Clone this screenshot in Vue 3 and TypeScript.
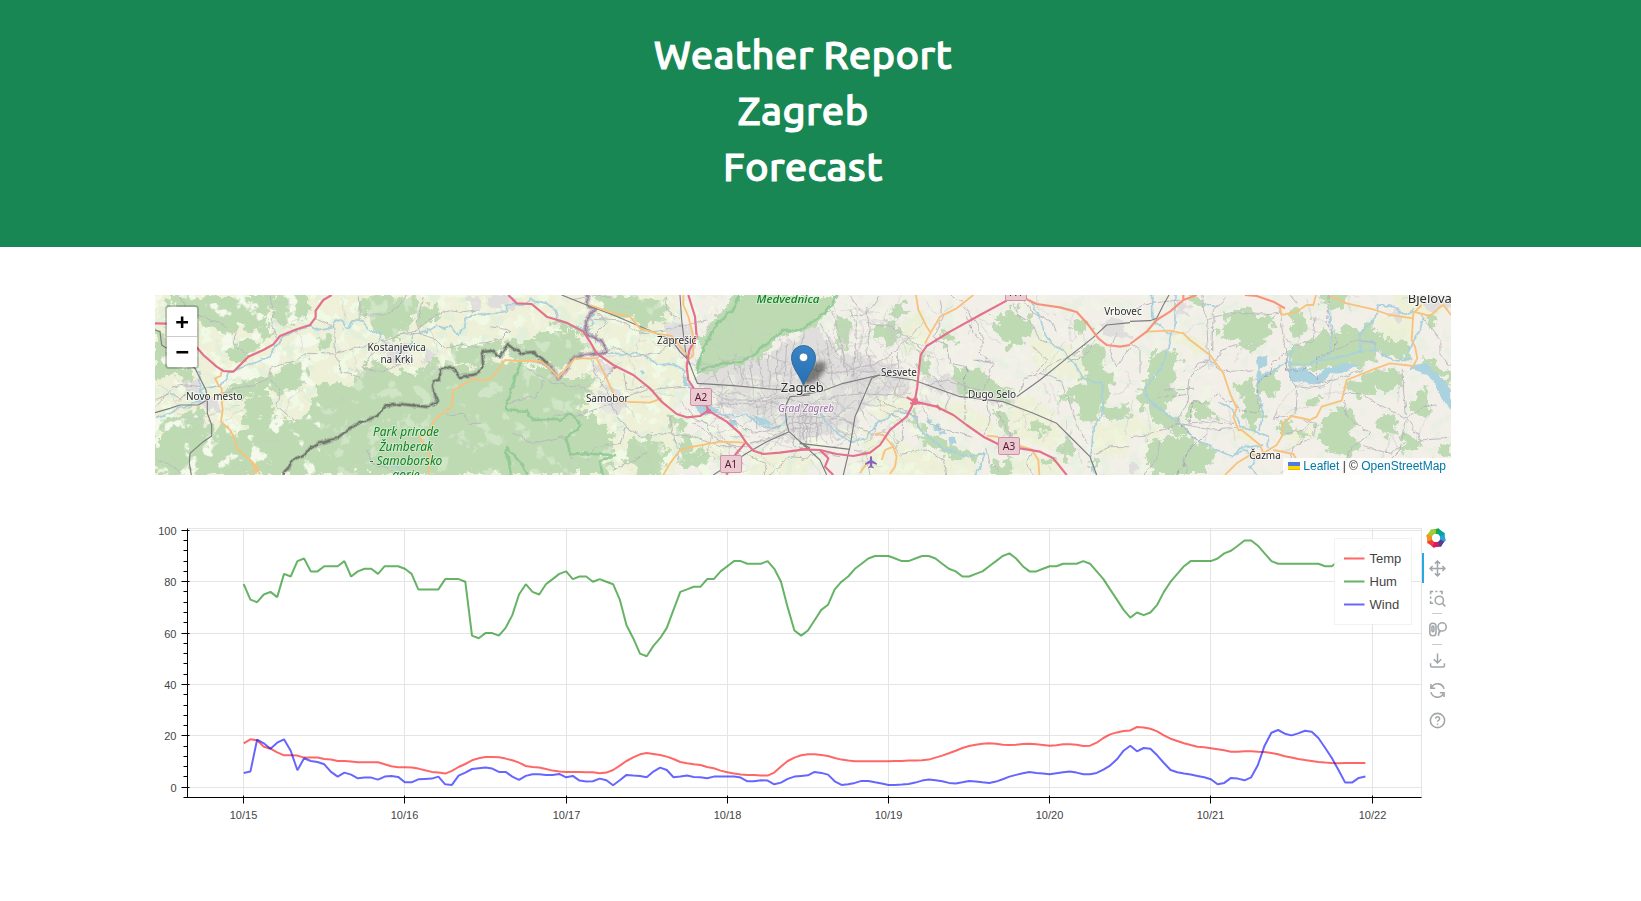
<script setup lang="ts">
interface Section {
  x: number
  forest: string[]
  farm: string[]
  town: string[]
  lake: string[]
  minor: string[]
  river: string[]
  rail: string[]
  primary: string[]
  trunk: string[]
  motorway: string[]
  admin: string[]
}

interface Label {
  text: string
  x: number
  y: number
  kind: string
}

// Map geometry, split into vertical sections; units are a third of a pixel.
const sections: Section[] = [
  {
    x: 150,
    forest: [
      '55,15 130,15 150,30 190,15 372,15 362,60 340,105 372,130 340,150 300,108 260,118 230,135 180,118 150,95 100,70 60,50',
      '15,110 45,125 50,170 90,235 130,240 130,280 90,270 50,250 15,280',
      '380,15 470,15 490,60 440,95 400,105 372,90 365,50',
      '630,20 800,15 800,60 780,110 720,150 690,130 650,95 632,60',
      '800,60 850,40 880,70 840,100 805,110',
      '990,238 990,555 400,555 150,555 120,540 80,500 40,460 15,400 60,385 110,360 150,350 165,390 200,420 240,400 260,440 300,420 280,380 290,330 340,300 370,340 380,380 440,400 480,370 500,300 540,270 600,290 620,260 650,220 690,215 720,250 790,250 850,210 900,222',
      '220,290 270,270 350,262 390,240 420,215 460,210 490,240 470,290 400,310 350,300 290,320 240,330',
      '890,170 990,160 990,230 940,220 900,200',
      '15,440 70,470 120,520 110,555 15,555',
      '230,180 280,150 330,150 310,190 270,215 240,220',
      '500,150 540,130 550,170 520,180',
    ],
    farm: [
      '370,110 560,60 650,100 700,150 660,180 620,250 560,260 490,200 420,210 360,240',
      '780,110 860,60 990,60 990,170 880,170 820,160 760,160',
      '180,350 215,380 200,440 250,500 200,555 130,540 120,470 150,390',
    ],
    town: [
      '150,320 215,330 220,370 180,370 150,340',
      '940,20 990,20 990,60 960,60',
      '700,160 780,160 780,215 720,215',
      '100,265 150,265 160,310 110,300',
      '820,180 860,190 850,225 825,215',
    ],
    lake: [],
    minor: [
      '360,15 370,60 365,110 385,145',
      '495,85 555,115 556,200 567,215 570,245 600,250 630,265',
      '555,190 600,180 700,150 750,135 800,120 860,75 900,62 940,68 990,62',
      '555,192 470,190 440,210 390,225 360,235 362,260 300,290 240,300 200,320',
      '360,265 390,300 380,350 410,375 445,398',
      '625,20 628,75 700,75 745,50 770,15',
      '740,135 800,130 850,145 880,175 950,165 990,175',
      '700,160 660,200 640,235 700,245 740,225 790,220',
      '15,350 70,290 110,285 150,290',
      '20,510 60,520 95,555',
      '15,330 60,310 90,330 120,300',
      '650,480 665,520 700,530 730,540',
      '890,375 940,370 960,400 990,400',
      '820,20 800,100 810,130',
      '260,120 250,160 300,200',
      '90,20 110,60 180,90 230,110',
    ],
    river: [
      '15,382 60,370 110,345 150,335 150,300 170,295 215,285 235,250 270,235 320,215 360,200 370,175 400,140 440,120 480,110 510,122 550,112 553,92 566,84 580,95 590,115 605,100 620,92 640,97 660,125 690,128 692,150 710,158',
      '740,190 780,165 790,135 830,125 860,105 885,118 905,105 925,135 945,115 945,85 965,75 990,75',
      '135,235 150,250 150,300 170,320',
      '690,518 740,530 765,552',
    ],
    rail: [
      '15,368 60,355 90,345 145,345 172,330 168,300 150,265 135,235 100,210',
      '172,330 172,370 185,405 185,438 160,455 120,490 118,520 124,555',
      '15,120 30,125 35,165 50,175',
    ],
    primary: [
      '215,245 212,258 195,265 205,285 215,295 215,330 218,360 213,395 240,420 255,450 260,475 300,510 310,525 330,552',
      '300,550 325,535 300,510',
      '990,270 970,265 950,278 910,300 905,350 870,375 850,395 840,430 808,438 825,470 840,500 835,552',
    ],
    trunk: [],
    motorway: [
      '15,100 50,101',
      '140,172 160,195 200,230 220,243 250,245 265,230 295,200 340,180 370,163 390,138 440,118 480,105 497,82 497,62 520,30 545,15',
    ],
    admin: [],
  },
  {
    x: 480,
    forest: [
      '0,170 30,155 85,152 130,160 180,130 230,120 300,135 320,150 340,180 290,200 240,240 225,245 200,225 120,210 85,190 70,170 40,190 0,240',
      '0,215 110,215 200,235 240,265 290,270 340,255 350,290 310,320 300,360 360,400 400,430 400,490 350,500 400,520 380,555 0,555',
      '650,240 640,220 665,190 655,150 680,105 730,60 760,15 990,15 990,90 960,120 900,140 860,180 810,215 760,225 700,245 665,255',
      '350,15 420,15 560,30 555,80 500,120 450,85 400,80 350,45',
      '460,450 510,440 560,470 540,555 480,555 430,510',
      '600,440 640,430 640,470 620,500 595,480',
      '205,90 250,100 330,120 300,130 230,115',
      '560,370 600,380 620,420 590,430',
      '610,490 680,480 700,510 660,530 600,530',
    ],
    farm: [
      '0,80 100,50 250,110 230,125 100,150 0,160',
      '210,15 320,15 330,120 240,90',
      '360,70 480,120 580,180 620,240 620,290 540,310 420,230 370,190',
      '400,230 460,260 540,330 460,370 420,300',
      '330,45 600,110 590,150 520,140 420,100',
      '640,440 780,460 720,500 640,530',
      '810,490 990,490 990,555 800,555',
    ],
    town: [
      '15,25 80,15 120,40 80,60 30,50',
      '640,290 660,255 760,225 860,190 920,160 990,120 990,470 900,440 800,380 720,340 700,310',
      '350,300 430,300 440,350 400,380 350,350',
      '550,80 640,110 640,200 590,190 560,140',
      '740,40 780,15 790,40',
      '330,200 400,240 370,270',
    ],
    lake: [
      '640,345 680,340 715,360 705,375 660,375',
      '815,375 850,385 880,405 840,402',
      '745,390 765,390 770,410 755,408',
      '608,262 622,264 625,285 612,285',
      '485,240 495,245 490,255 480,248',
    ],
    minor: [
      '335,205 345,250 380,300 400,360 440,410 480,440 560,430 640,440 720,470 800,470',
      '350,205 400,170 460,200 540,190 570,160',
      '420,330 500,300 600,290 640,290',
      '400,340 340,360 300,380 240,370 200,400',
      '440,410 420,460 350,470 320,510',
      '190,270 170,320 110,330 80,345',
      '100,430 160,460 250,440 280,510',
      '340,85 420,90 480,130 560,120 640,100 680,90',
      '350,65 380,100 350,130 350,160',
      '570,380 580,440 600,480 590,520',
      '640,400 700,440 760,470 790,520',
      '700,450 680,400 640,380 600,330',
      '680,300 680,350 640,340',
      '690,300 740,330 800,330 900,340',
      '700,250 720,290',
      '740,240 760,290',
      '780,230 790,292',
      '810,225 820,295',
      '835,205 850,296',
      '865,190 870,297',
      '890,180 890,310 830,330 830,420',
      '920,165 910,298',
      '945,150 930,300',
      '970,130 950,240',
      '720,340 820,340 910,320 990,350',
      '730,375 820,430 900,410',
      '810,460 860,450 920,420 990,410',
      '940,360 940,470 990,470',
      '960,360 960,465',
      '980,360 980,465',
      '920,380 990,380',
      '920,400 990,400',
      '870,555 930,500 990,505',
      '500,490 440,520 400,540',
      '140,235 220,280 300,290 350,320',
      '270,30 350,15 400,25',
      '600,90 560,60 560,20',
      '0,160 60,150 90,120 30,110',
      '720,480 740,555',
      '770,480 860,520 850,555',
      '400,230 360,290',
      '430,240 440,300 500,290',
    ],
    river: [
      '0,75 40,70 80,60 80,45 130,42 150,28 200,40 225,60 235,90 310,120 340,105 330,80 345,70',
      '385,190 430,195 460,185 500,200 530,220 580,225 615,240 610,265 640,300 635,340 690,365 740,378 800,375 840,405 890,415 930,380',
      '335,130 350,145 370,165',
    ],
    rail: [
      '245,15 320,45 400,75 470,105 540,135 575,150 600,185 625,210 640,250 652,280 760,287 870,297 990,305',
      '600,15 605,90 618,195 630,225',
      '990,315 930,320 915,350 920,400 927,425 960,455 990,475',
      '927,425 860,455 800,490 700,555',
    ],
    primary: [
      '0,272 30,268 50,245 75,210 110,213 180,213 205,230 235,262 285,205 350,205 375,255 400,310 420,335 510,338 545,325',
      '330,45 400,70 450,80 480,115 530,130 575,138 600,170 620,195',
      '610,15 610,45 625,80 638,130 640,195 625,210',
      '550,555 570,520 600,480 640,470 720,455 800,458',
    ],
    trunk: [],
    motorway: [
      '85,15 110,40 155,42 200,80 260,98 310,125 330,155 350,190 400,225 460,255 510,295 545,335 590,372 620,382 660,378 685,362 740,395 780,430 800,460 820,482 850,492 900,488 990,476',
      '625,15 645,80 650,140 628,180 620,230 625,270 645,300 675,335 685,362',
      '795,460 765,495 740,555',
      '400,235 412,230',
    ],
    admin: [
      '320,15 325,50 345,55 318,90 320,130 360,150 380,185 350,190 285,200 260,240 235,265 210,230 170,210',
    ],
  },
  {
    x: 800,
    forest: [
      '0,15 110,15 85,60 40,115 0,130',
      '110,80 150,90 155,130 120,180 110,130',
      '240,100 290,90 300,150 260,180 240,150 220,130',
      '270,60 310,40 325,60 290,80',
      '580,80 650,50 700,110 680,150 630,175 600,140',
      '820,90 870,110 850,135 820,115',
      '850,170 905,165 905,230 935,260 930,310 900,345 890,400 830,390 840,340 780,330 800,290 850,290',
      '900,350 985,345 990,385 920,400',
      '450,230 540,240 600,280 640,300 620,340 560,310 500,320 470,290',
      '330,360 380,410 420,450 500,490 550,480 540,520 470,500 400,480 350,440',
      '590,360 615,360 640,440 600,430',
      '580,500 600,530 630,490 640,555 570,555',
      '800,430 830,480 800,520 780,480',
      '360,170 380,200 390,260 360,250',
      '680,390 740,400 750,430 700,430',
      '720,500 760,510 740,540',
      '410,130 450,120 470,160 430,170',
      '880,500 900,530 870,550',
    ],
    farm: [
      '300,100 350,60 380,110 370,170 320,210',
      '220,320 300,300 340,340 270,400 230,400',
      '190,410 260,470 270,555 190,555',
      '390,330 470,340 590,390 580,450 520,420 430,370',
      '620,310 720,330 790,420 770,480 640,440',
      '280,450 400,490 520,520 520,555 270,555',
      '700,130 850,180 850,280 760,240 700,240',
      '640,500 780,500 780,555 640,555',
      '880,400 990,400 990,490 880,500',
    ],
    town: [
      '0,130 60,110 120,190 240,210 340,260 340,300 240,320 170,370 180,430 0,440',
      '370,260 440,260 500,290 490,320 390,300',
      '560,320 640,310 650,345 560,340',
      '900,100 960,90 990,140 930,150',
      '340,320 390,320 390,350',
    ],
    lake: [
      '395,410 420,403 425,420 405,424',
      '415,425 435,418 440,432 420,436',
      '445,445 465,440 470,460 450,465',
      '380,390 395,388 400,395 382,398',
    ],
    minor: [
      '60,100 110,190 160,240 230,250',
      '100,70 130,190 140,260',
      '150,60 170,100 160,260',
      '200,50 210,140 200,180 220,250',
      '240,20 200,70 150,80',
      '30,180 50,230 60,290',
      '80,150 100,290',
      '0,230 100,250 230,220 290,180 370,100',
      '0,350 60,330 160,310 240,310 320,320',
      '0,380 80,380 160,400',
      '0,400 70,400',
      '10,360 10,450',
      '30,350 30,455',
      '50,350 50,455',
      '70,350 150,400 230,440',
      '200,100 280,110 340,160 370,180',
      '290,190 300,260 280,320',
      '230,330 310,360 350,380 360,420',
      '365,345 390,400 440,420 520,440',
      '420,30 430,80 400,140 440,170 450,220 500,230',
      '640,40 650,75 690,95 720,150 750,160',
      '500,60 530,100 550,150',
      '550,300 580,220 520,210',
      '660,310 670,270 720,250 780,270 810,340 830,400 860,460',
      '720,250 740,230 830,190 860,160',
      '660,20 690,60 760,100 770,130',
      '560,320 570,390 550,440',
      '590,325 600,390 630,430 620,455',
      '400,260 450,320 430,370',
      '380,285 440,270 540,300',
      '240,360 310,390 310,440 280,480',
      '300,490 380,480 430,510 440,555',
      '560,470 570,520 600,545',
      '880,495 930,470 990,470',
      '950,130 930,180 950,230 990,170',
      '700,170 740,210 700,260',
      '700,480 680,520 700,555',
      '160,480 200,490 210,555',
      '0,510 50,490 120,500',
      '150,15 180,60',
      '890,150 850,200 800,220',
    ],
    river: [
      '60,370 100,420 150,455 200,445 230,400 290,365 340,375 370,430 420,470 460,485 510,500 555,490 540,530 525,555',
      '690,35 715,70 735,130 760,165 790,185 830,230 850,265 908,280 908,330 905,380 880,410 875,480 870,510 885,555',
    ],
    rail: [
      '0,315 60,305 130,280 238,255 340,270 480,320 610,335 700,370 770,400 820,450 870,500 890,555',
      '238,255 215,265 165,380 150,470 130,555',
      '650,320 720,270 800,205 880,142 920,105 990,98',
      '0,460 150,478',
      '0,455 60,510 80,555',
    ],
    primary: [
      '348,15 355,60 380,110 392,128 375,160',
      '392,128 420,80 470,55 520,15',
      '225,432 250,435 280,470 290,500 285,530 270,552',
      '280,470 255,480 245,510',
      '560,437 590,440 650,465 695,478 715,510 718,555',
      '180,550 200,520',
    ],
    trunk: ['680,28 710,42 780,52 830,66 860,98 895,145 920,165 960,170 990,165'],
    motorway: [
      '620,32 540,75 450,125 380,168 362,195 357,235 352,290 345,330 320,380 270,420 240,465 210,488 160,498 110,492 60,480 0,478',
      '320,322 345,335 410,350 460,375 500,405 550,440 600,465 660,475 720,485 760,505 800,555',
      '60,480 85,505 75,530 100,555',
      '345,322 345,345',
      '330,340 365,340',
      '410,345 422,360',
    ],
    admin: [
      '450,15 490,40 500,80 520,130 550,155 540,190 570,215 530,210',
      '500,230 495,280 495,400',
    ],
  },
  {
    x: 1130,
    forest: [
      '170,20 200,15 220,35 190,50',
      '290,80 340,50 380,75 430,80 430,110 380,180 340,170 300,150 260,130 280,110',
      '480,60 520,60 535,100 520,140 480,130',
      '475,200 480,170 540,160 580,120 620,130 640,100 690,130 720,105 760,140 830,160 850,200 820,210 760,190 720,220 640,230 580,240 520,230 480,250',
      '15,290 60,260 60,190 110,180 150,200 140,250 130,330 90,340 150,400 180,450 120,420 60,380 30,330',
      '310,290 350,270 380,290 400,380 370,430 340,400 350,340',
      '385,260 440,230 450,280 420,330 395,310',
      '180,350 220,330 250,370 210,400 180,390',
      '570,390 630,350 670,370 680,400 660,430 700,470 650,500 590,480 560,430',
      '60,450 150,440 250,470 230,555 70,555 50,500',
      '640,290 700,260 740,240 800,240 830,260 810,300 740,300 680,320',
      '860,310 890,290 900,340 880,380 840,370',
      '740,380 790,370 800,430 750,430',
      '800,440 840,430 880,470 820,480',
      '870,210 920,220 963,250 963,290 920,260',
      '240,370 280,390 260,405',
      '500,420 540,430 520,460',
      '540,320 570,310 560,350 530,340',
      '560,15 650,15 640,60 590,50',
      '890,80 930,80 920,110 890,100',
      '920,470 963,460 963,510 930,500',
      '450,400 480,390 490,420 450,460',
    ],
    farm: [
      '90,120 200,140 240,190 190,190 140,160',
      '720,90 840,60 850,130 830,180 760,140',
      '780,15 963,15 963,60 880,80 800,50',
      '0,360 60,400 100,420 80,450 0,430',
      '480,420 560,400 550,440 480,470',
      '300,430 350,390 380,430 360,460',
    ],
    town: [
      '780,70 810,55 820,80 800,100',
      '150,40 190,60 170,80 140,60',
      '225,210 250,210 245,235',
      '860,20 963,15 963,50 890,60',
      '0,515 30,525 20,545 0,540',
      '740,230 780,225 760,245',
    ],
    lake: [
      '380,200 410,195 412,225 390,240 400,265 375,270 385,240',
      '470,240 520,230 560,260 590,235 660,215 690,225 650,245 600,250 570,285 520,278 480,270',
      '850,225 890,220 930,260 963,300 963,360 930,320 910,270 870,245 840,238',
    ],
    minor: [
      '215,15 230,90 235,190 240,210',
      '0,60 60,40 150,30',
      '235,85 320,65 400,75 450,70',
      '450,50 455,100 460,150 470,180 470,240 500,290 495,375',
      '240,210 180,260 175,330 140,400',
      '255,212 290,170 320,160',
      '240,215 280,245 370,240',
      '85,320 140,315 170,310',
      '100,300 190,298',
      '490,375 430,385 440,370',
      '520,390 560,400 550,440 490,470 480,520 450,550',
      '540,290 600,270 640,260 700,240',
      '500,290 540,295 580,290 600,270',
      '640,310 690,310 740,340 830,385 880,350 920,345',
      '640,330 650,380 720,430 660,480 640,555',
      '830,385 860,430 870,450 960,445',
      '830,385 810,480 780,510',
      '820,235 820,300 830,380',
      '870,70 900,110 930,150 930,190 963,230',
      '700,470 780,490 830,460',
      '150,400 240,420 320,415',
      '150,405 250,395 310,400',
      '0,440 50,435 90,420 150,400',
      '170,550 160,500 230,430',
      '40,555 80,510 90,450',
      '555,80 550,150 500,170 465,145',
      '290,20 250,60 245,180',
      '620,180 680,150 740,160',
      '480,15 500,40',
      '470,430 520,420 540,400',
      '0,160 30,180 30,250',
      '240,210 200,220 190,240',
    ],
    river: [
      '65,15 65,80 90,110 125,140 110,190 90,240 50,290 45,320 80,350 150,405 200,450 260,480 310,500 330,475 400,465',
      '135,15 135,110 120,140',
      '390,420 400,360 385,310 385,270 430,240 470,215 520,225 610,205 690,185 740,180 790,210 850,205',
      '595,60 605,120 600,190 540,220',
      '690,190 690,130 735,85 745,45 790,50 820,75 850,60',
      '690,155 735,155 735,185',
      '265,335 310,360 330,410 390,430 415,440 415,475',
      '880,85 870,120 850,150 830,200',
      '310,500 340,480 375,500 360,530 380,555',
      '215,40 255,50',
      '480,240 480,190 495,170',
    ],
    rail: ['0,94 60,92 80,85 100,45 117,15'],
    primary: [
      '50,125 120,122 160,130 180,150 240,195 280,250 300,310 320,355 310,380 325,420 335,420 390,465 400,490 360,495 320,520 285,555',
      '400,490 440,465 455,440 460,400 485,378 540,390 560,380 575,350 635,332 650,270 730,238 780,220 850,228 862,205 855,170 845,150 850,70 875,45',
      '600,18 650,40 730,58 780,75 850,85',
      '850,65 900,78 925,55 940,45 963,75',
      '455,75 500,65 530,45 550,45 558,15',
      '450,50 455,75',
      '430,480 490,492 500,510',
    ],
    trunk: [
      '0,162 50,125 80,90 120,65 160,30 200,15',
      '345,15 380,18 430,35 465,55',
      '160,30 160,15',
    ],
    motorway: [],
    admin: [
      '595,15 590,90 600,120 620,150 610,185 560,200 560,270 530,235 470,245 465,190 430,215 420,250 385,270 380,340 395,350 380,370 330,360 310,330 290,335 260,310 240,340 185,335 180,400',
      '150,405 200,450 170,490 160,530 140,555',
    ],
  },
]

// Local lanes: short meandering lines from a seeded generator, denser in the city.
let seed = 77
const rand = (): number => {
  seed = (seed * 1103515245 + 12345) % 2147483648
  return seed / 2147483648
}
const lane = (x: number, y: number, steps: number, len: number): string => {
  let angle = rand() * Math.PI * 2
  const out = [`${x.toFixed(1)},${y.toFixed(1)}`]
  for (let i = 0; i < steps; i++) {
    angle += (rand() - 0.5) * 1.3
    x += Math.cos(angle) * len
    y += Math.sin(angle) * len
    out.push(`${x.toFixed(1)},${y.toFixed(1)}`)
  }
  return out.join(' ')
}
const countryLanes = Array.from({ length: 130 }, () => lane(155 + rand() * 1296, 295 + rand() * 180, 6, 6))
const cityLanes = Array.from({ length: 150 }, () => lane(705 + rand() * 195, 350 + rand() * 95, 3, 7))
const foothillLanes = Array.from({ length: 50 }, () => lane(820 + rand() * 90, 310 + rand() * 80, 4, 8))

// Protected-area outlines: the nature park and the mountain.
const parkEdges = [
  'M521 361 L505 409 L527 411 L533 420 L560 420 L570 413 L581 425 L566 438 L570 453 L615 455 L600 462 L603 475',
  'M528 475 L522 465 L506 446 L511 475',
  'M740 295 L733 310 L716 325 L701 353 L697 373 L711 366 L742 362 L760 349 L782 331 L800 330 L825 313 L838 295',
]
const stateBorder =
  'M283 475 L293 461 L305 453 L317 444 L337 438 L355 425 L375 417 L386 406 L400 404 L410 405 L428 407 L437 401 L433 388 L434 380 L440 379 L440 370 L450 367 L460 377 L477 374 L483 366 L482 351 L490 350 L500 357 L508 344 L520 353 L535 352 L548 364'

const labels: Label[] = [
  { text: 'Kostanjevica', x: 396.7, y: 351, kind: 'town' },
  { text: 'na Krki', x: 396.7, y: 363.3, kind: 'town' },
  { text: 'Novo mesto', x: 214.3, y: 399.5, kind: 'town' },
  { text: 'Zaprešić', x: 676.7, y: 344, kind: 'town' },
  { text: 'Samobor', x: 607.3, y: 402, kind: 'town' },
  { text: 'Sesvete', x: 899, y: 375.5, kind: 'town' },
  { text: 'Dugo Selo', x: 992, y: 397.7, kind: 'town' },
  { text: 'Vrbovec', x: 1123, y: 314.5, kind: 'town' },
  { text: 'Čazma', x: 1265, y: 458.7, kind: 'town' },
  { text: 'Bjelova', x: 1429.8, y: 303.3, kind: 'city' },
  { text: 'Zagreb', x: 802.3, y: 391.7, kind: 'city' },
  { text: 'Grad Zagreb', x: 806, y: 412.3, kind: 'district' },
  { text: 'Park prirode', x: 406, y: 436.3, kind: 'park' },
  { text: 'Žumberak', x: 406, y: 450.7, kind: 'park' },
  { text: '- Samoborsko', x: 406, y: 465, kind: 'park' },
  { text: 'gorje', x: 406, y: 479.3, kind: 'park' },
  { text: 'Medvednica', x: 788, y: 303.3, kind: 'park strong' },
]

const shields = [
  { text: 'A2', x: 690.5, y: 388.5 },
  { text: 'A1', x: 720.5, y: 455.5 },
  { text: 'A3', x: 998.5, y: 437.5 },
  { text: 'A4', x: 1005.5, y: 283.5 },
]

const hum: number[] = [
  79, 73, 72, 75, 76, 74, 83, 82, 88, 89, 84, 84, 86, 86, 86, 88, 82, 84, 85, 85, 83, 86, 86, 86,
  85, 83, 77, 77, 77, 77, 81, 81, 81, 80, 59, 58, 60, 60, 59, 62, 67, 75, 79, 76, 75, 79, 81, 83,
  84, 81, 82, 82, 80, 81, 80, 79, 73, 63, 58, 52, 51, 55, 58, 62, 69, 76, 77, 78, 78, 81, 81, 84,
  86, 88, 88, 87, 87, 87, 88, 85, 80, 70, 61, 59, 61, 65, 69, 71, 77, 80, 82, 85, 87, 89, 90, 90,
  90, 89, 88, 88, 89, 90, 90, 89, 87, 85, 84, 82, 82, 83, 84, 86, 88, 90, 91, 89, 86, 84, 84, 85,
  86, 86, 87, 87, 87, 88, 87, 84, 81, 77, 73, 69, 66, 68, 67, 68, 71, 76, 80, 83, 86, 88, 88, 88,
  88, 89, 91, 92, 94, 96, 96, 94, 91, 88, 87, 87, 87, 87, 87, 87, 87, 86, 86, 88, 89, 90, 92, 94,
]

const tempRaw: number[] = [
  160, 148, 151, 170, 176, 187, 196, 196, 197, 203, 203, 203, 207, 209, 213, 213, 215, 217, 217, 217, 217, 223, 229, 232,
  232, 233, 236, 241, 246, 248, 251, 243, 231, 222, 211, 205, 201, 201, 202, 206, 211, 218, 228, 231, 233, 237, 242, 245,
  246, 246, 246, 247, 247, 250, 248, 240, 227, 213, 202, 193, 189, 192, 195, 200, 207, 216, 220, 223, 225, 231, 235, 242,
  247, 251, 254, 255, 255, 257, 257, 248, 230, 213, 203, 196, 193, 193, 195, 198, 204, 209, 212, 214, 214, 214, 214, 214,
  214, 213, 213, 212, 212, 211, 209, 203, 197, 190, 182, 174, 168, 164, 161, 160, 161, 164, 165, 164, 162, 161, 163, 165,
  167, 166, 163, 163, 164, 168, 167, 158, 144, 133, 127, 123, 121, 111, 112, 116, 124, 136, 146, 153, 160, 165, 170, 172,
  175, 178, 181, 185, 185, 184, 184, 185, 186, 189, 193, 199, 203, 207, 210, 213, 216, 218, 219, 220, 219, 219, 219, 219,
]
const windRaw: number[] = [
  249, 245, 149, 160, 176, 158, 148, 182, 241, 205, 213, 216, 223, 246, 260, 248, 254, 265, 263, 263, 269, 260, 258, 261,
  277, 277, 268, 267, 266, 260, 283, 285, 257, 248, 237, 235, 233, 236, 246, 246, 260, 270, 258, 253, 253, 255, 255, 252,
  262, 258, 272, 275, 274, 266, 271, 286, 271, 255, 257, 258, 262, 245, 233, 240, 262, 260, 257, 261, 262, 265, 260, 260,
  260, 260, 263, 274, 274, 271, 272, 283, 278, 267, 260, 258, 256, 246, 249, 254, 274, 285, 283, 279, 273, 273, 277, 281,
  285, 285, 284, 282, 278, 272, 269, 271, 274, 279, 281, 277, 273, 275, 277, 279, 275, 268, 260, 255, 250, 246, 249, 251,
  253, 250, 247, 245, 248, 253, 253, 249, 239, 227, 208, 182, 167, 184, 174, 176, 196, 219, 240, 247, 251, 254, 258, 262,
  268, 283, 279, 264, 266, 271, 262, 225, 167, 128, 120, 131, 136, 130, 122, 125, 144, 173, 204, 240, 278, 278, 264, 260,
]
const toValue = (r: number): number => (292 - r) / 7.725

const sx = (hour: number): number => 88.65 + hour * 6.717
const sy = (v: number): number => 269.25 - v * 2.57
const points = (values: number[]): string =>
  values.map((v, i) => `${sx(i).toFixed(1)},${sy(v).toFixed(1)}`).join(' ')

const series = [
  { name: 'Temp', color: 'red', pts: points(tempRaw.map(toValue)) },
  { name: 'Hum', color: 'green', pts: points(hum) },
  { name: 'Wind', color: 'blue', pts: points(windRaw.map(toValue)) },
]

const crisp = (n: number): number => Math.floor(n) + 0.5
const yTicks = [0, 20, 40, 60, 80, 100].map((v) => ({ v, y: crisp(sy(v)) }))
const minorTicks = Array.from({ length: 27 }, (_, i) => -4 + i * 4)
  .filter((v) => v % 20 !== 0)
  .map((v) => crisp(sy(v)))
const xTicks = Array.from({ length: 8 }, (_, i) => ({ label: `10/${15 + i}`, x: crisp(sx(i * 24)) }))

const petals = ['#1fa44a', '#00a79d', '#2d9fdb', '#5a3a95', '#d91c5c', '#ef4136', '#f7941e', '#9fcc3b']
</script>

<template>
  <div class="page">
    <header class="hero">
      <h1>Weather Report</h1>
      <h1>Zagreb</h1>
      <h1>Forecast</h1>
    </header>

    <main class="content">
      <section class="map">
        <svg class="tiles" viewBox="155 295 1296 180" width="1296" height="180">
          <defs>
            <filter id="rough" x="-2%" y="-5%" width="104%" height="110%">
              <feTurbulence type="fractalNoise" baseFrequency="0.11" numOctaves="4" seed="4" />
              <feDisplacementMap in="SourceGraphic" scale="20" xChannelSelector="R" yChannelSelector="G" />
            </filter>
            <filter id="wobble" x="-2%" y="-5%" width="104%" height="110%">
              <feTurbulence type="fractalNoise" baseFrequency="0.12" numOctaves="3" seed="9" />
              <feDisplacementMap in="SourceGraphic" scale="5" xChannelSelector="R" yChannelSelector="G" />
            </filter>
            <filter id="woods" x="0" y="0" width="100%" height="100%">
              <feTurbulence type="fractalNoise" baseFrequency="0.07" numOctaves="5" seed="12" />
              <feColorMatrix values="0 0 0 0 0.74  0 0 0 0 0.86  0 0 0 0 0.7  14 0 0 0 -8.2" />
            </filter>
            <filter id="meadow" x="0" y="0" width="100%" height="100%">
              <feTurbulence type="fractalNoise" baseFrequency="0.08" numOctaves="5" seed="31" />
              <feColorMatrix values="0 0 0 0 0.86  0 0 0 0 0.95  0 0 0 0 0.77  0 14 0 0 -7.9" />
            </filter>
            <filter id="clearing" x="0" y="0" width="100%" height="100%">
              <feTurbulence type="fractalNoise" baseFrequency="0.06" numOctaves="5" seed="55" />
              <feColorMatrix values="0 0 0 0 0.91  0 0 0 0 0.95  0 0 0 0 0.83  0 0 12 0 -7.3" />
            </filter>
            <linearGradient id="pin" x1="0" y1="0" x2="0" y2="1">
              <stop offset="0" stop-color="#3a85c6" />
              <stop offset="1" stop-color="#2570b5" />
            </linearGradient>
            <filter id="soft" x="-50%" y="-50%" width="200%" height="200%"><feGaussianBlur stdDeviation="2" /></filter>
          </defs>

          <rect class="land" x="155" y="295" width="1296" height="180" />
          <rect class="farm" x="155" y="295" width="520" height="180" />
          <g filter="url(#rough)">
            <g v-for="s in sections" :key="s.x" :transform="`translate(${s.x} 290) scale(.33333)`">
              <polygon v-for="(p, i) in s.farm" :key="i" class="farm" :points="p" />
            </g>
          </g>
          <rect x="155" y="295" width="560" height="180" filter="url(#meadow)" />
          <rect x="715" y="295" width="500" height="180" filter="url(#meadow)" opacity=".45" />
          <rect x="155" y="295" width="640" height="180" filter="url(#woods)" opacity=".75" />
          <rect x="795" y="295" width="656" height="180" filter="url(#woods)" opacity=".4" />
          <g filter="url(#rough)">
            <g v-for="s in sections" :key="s.x" :transform="`translate(${s.x} 290) scale(.33333)`">
              <polygon v-for="(p, i) in s.town" :key="i" class="built" :points="p" />
              <polygon v-for="(p, i) in s.forest" :key="i" class="forest" :points="p" />
            </g>
          </g>
          <rect x="155" y="295" width="165" height="180" filter="url(#clearing)" />
          <rect x="320" y="295" width="380" height="180" filter="url(#clearing)" opacity=".35" />
          <rect x="700" y="375" width="230" height="100" filter="url(#meadow)" opacity=".5" />
          <g filter="url(#wobble)">
            <polyline v-for="(p, i) in countryLanes" :key="'c' + i" class="lane" :points="p" />
            <polyline v-for="(p, i) in cityLanes" :key="'t' + i" class="lane street" :points="p" />
            <polyline v-for="(p, i) in foothillLanes" :key="'f' + i" class="lane" :points="p" />
            <g v-for="s in sections" :key="s.x" :transform="`translate(${s.x} 290) scale(.33333)`">
              <polygon v-for="(p, i) in s.lake" :key="i" class="lake" :points="p" />
              <polyline v-for="(p, i) in s.river" :key="i" class="river" :points="p" />
              <polyline v-for="(p, i) in s.minor" :key="i" class="minor" :points="p" />
              <polyline v-for="(p, i) in s.admin" :key="i" :class="['admin', { wide: s.x === 480 }]" :points="p" />
              <template v-if="s.x === 480">
                <polyline v-for="(p, i) in s.admin" :key="'n' + i" class="admin core" :points="p" />
              </template>
            </g>
            <path v-for="(d, i) in parkEdges" :key="i" class="park-edge" :d="d" />
            <path class="border-halo" :d="stateBorder" />
            <path class="border-line" :d="stateBorder" />
          </g>
          <g v-for="s in sections" :key="s.x" :transform="`translate(${s.x} 290) scale(.33333)`">
            <polyline v-for="(p, i) in s.rail" :key="i" class="rail" :points="p" />
            <polyline v-for="(p, i) in s.primary" :key="i" class="primary" :points="p" />
            <polyline v-for="(p, i) in s.trunk" :key="i" class="trunk" :points="p" />
            <polyline v-for="(p, i) in s.motorway" :key="i" class="motorway" :points="p" />
          </g>
          <circle class="junction" cx="915" cy="401" r="3.2" />
          <circle class="junction" cx="708.5" cy="411" r="2.6" />

          <g v-for="s in shields" :key="s.text">
            <rect class="shield" :x="s.x" :y="s.y" width="21" height="17" rx="1.5" />
            <text class="shield-text" :x="s.x + 10.5" :y="s.y + 12.5">{{ s.text }}</text>
          </g>
          <path
            class="plane"
            d="M871 456 q1 0 1.1 2 v2.2 l4.8 3 v1.5 l-4.8-1.5 v2.8 l1.7 1.3 v1 l-2.8-.8 l-2.8.8 v-1 l1.7-1.3 v-2.8 l-4.8 1.5 v-1.5 l4.8-3 v-2.2 q.1-2 1.100-2z"
          />
          <text v-for="l in labels" :key="l.text" :class="['place', l.kind]" :x="l.x" :y="l.y">{{ l.text }}</text>

          <ellipse cx="814" cy="373" rx="15" ry="7" transform="rotate(-45 814 373)" opacity=".45" filter="url(#soft)" />
          <path
            d="M803.500 385.500 C801 377 791.500 368 791.500 357.500 A12 12 0 0 1 815.500 357.500 C815.500 368 806 377 803.500 385.500z"
            fill="url(#pin)"
            stroke="#2e6c97"
          />
          <circle cx="803.5" cy="357.3" r="4.3" fill="#fff" stroke="#2e6c97" stroke-width=".8" />
        </svg>

        <div class="zoom">
          <button type="button">+</button>
          <button type="button">−</button>
        </div>
        <div class="credit">
          <svg class="flag" width="12" height="8" viewBox="0 0 12 8">
            <path fill="#4c7be1" d="M0 0h12v4H0z" />
            <path fill="#ffd500" d="M0 4h12v3H0z" />
            <path fill="#e0bc00" d="M0 7h12v1H0z" />
          </svg><a>Leaflet</a> | © <a>OpenStreetMap</a>
        </div>
      </section>

      <section class="plot">
        <svg class="figure" width="1268" height="310" viewBox="0 0 1268 310">
          <rect class="frame" x="32.5" y="10.5" width="1234" height="269" />
          <line v-for="t in xTicks" :key="t.label" class="grid" :x1="t.x" :x2="t.x" y1="10.5" y2="279.5" />
          <line v-for="t in yTicks" :key="t.v" class="grid" x1="32.5" x2="1266.5" :y1="t.y" :y2="t.y" />
          <polyline v-for="s in series" :key="s.name" class="series" :class="s.color" :points="s.pts" />
          <path class="axis" d="M32.500 10.500V280M32.500 279.500H1266.500" />
          <line v-for="t in yTicks" :key="t.v" class="axis" x1="26.5" x2="34.5" :y1="t.y" :y2="t.y" />
          <line v-for="y in minorTicks" :key="y" class="axis" x1="28.5" x2="32.5" :y1="y" :y2="y" />
          <line v-for="t in xTicks" :key="t.label" class="axis" :x1="t.x" :x2="t.x" y1="277.5" y2="285.5" />
          <text v-for="t in yTicks" :key="t.v" class="tick end" x="21.5" :y="t.y + 4">{{ t.v }}</text>
          <text v-for="t in xTicks" :key="t.label" class="tick mid" :x="t.x" y="301.3">{{ t.label }}</text>

          <rect class="legend" x="1179.5" y="20.5" width="77" height="86" />
          <g v-for="(s, i) in series" :key="s.name">
            <line class="series" :class="s.color" x1="1189" x2="1209.5" :y1="40.5 + i * 23" :y2="40.5 + i * 23" />
            <text class="legend-text" x="1214.5" :y="45.3 + i * 23">{{ s.name }}</text>
          </g>
        </svg>

        <div class="toolbar">
          <svg class="logo" width="20" height="20" viewBox="-10 -10 20 20">
            <g v-for="(c, i) in petals" :key="c" :transform="`rotate(${i * 45})`">
              <path :fill="c" d="M-3.400-8.200 L2.600-9.800 L6-6.200 L3.200-3.200 L-2-4.600z" />
            </g>
            <circle r="3.900" fill="#fff" />
          </svg>
          <span class="tool active">
            <svg viewBox="0 0 16 16"><path d="M8 1v14M1 8h14M5.600 3.400 8 1l2.400 2.400M5.600 12.600 8 15l2.400-2.400M3.400 5.600 1 8l2.400 2.400M12.600 5.600 15 8l-2.400 2.400" /></svg>
          </span>
          <span class="tool">
            <svg viewBox="0 0 16 16"><path d="M1.500 4V1.500H4M6 1.500h2M10 1.500h2.300V4M1.500 6.200v2M1.500 10.300v2.200H4" /><circle cx="9.7" cy="9.7" r="3.9" /><path d="m12.500 12.500 2.900 2.900" /></svg>
          </span>
          <i class="rule"></i>
          <span class="tool">
            <svg class="wheel" viewBox="0 0 17 16"><rect x=".8" y="2" width="5.800" height="12" rx="2.900" /><rect x="2.800" y="4.600" width="1.800" height="5.500" rx=".9" /><circle cx="12.4" cy="5.6" r="3.900" /><path d="M9.800 8.600 8.900 14M10.800 9.500 9 12" /></svg>
          </span>
          <i class="rule"></i>
          <span class="tool">
            <svg viewBox="0 0 16 16"><path d="M8 1.500v8.500M4.500 6.800 8 10.300l3.500-3.500M1.500 10.500v2.500q0 1.200 1.200 1.200h10.600q1.200 0 1.200-1.200v-2.500" /></svg>
          </span>
          <span class="tool">
            <svg viewBox="0 0 16 16"><path d="M14.200 6.500A6.300 6.300 0 0 0 2.600 4.900M1.800 1.800v4h4M1.800 9.500a6.300 6.300 0 0 0 11.600 1.600M14.200 14.200v-4h-4" /></svg>
          </span>
          <span class="tool">
            <svg viewBox="0 0 16 16"><circle cx="8" cy="8" r="6.700" /><path d="M6.200 6.300a1.900 1.900 0 1 1 2.500 1.800q-.7.300-.7 1.100M8 10.800v1.200" /></svg>
          </span>
        </div>
      </section>
    </main>
  </div>
</template>

<style>
body {
  margin: 0;
  background: #fff;
}
</style>

<style scoped>
.page {
  min-height: 901px;
  background: #fff;
  font-family: "Liberation Sans", Arial, sans-serif;
}
.hero {
  box-sizing: border-box;
  height: 247px;
  padding: 31px 190px 0 155px;
  background: #198754;
  color: #fff;
  text-align: center;
}
.hero h1 {
  margin: 0 0 8px;
  font: 500 40px/48px Ubuntu, "Noto Sans", sans-serif;
  letter-spacing: .3px;
  -webkit-text-stroke: 1px #fff;
}
.content {
  width: 1296px;
  margin-left: 155px;
  padding-top: 48px;
}
.map {
  position: relative;
  height: 180px;
  overflow: hidden;
}
.tiles {
  display: block;
}
.land { fill: #f2efe9; }
.farm { fill: #eef0d8; }
.forest { fill: #bddab3; }
.built { fill: #e0dedc; }
.lake { fill: #aad3df; }
.river, .minor, .lane, .admin, .rail, .primary, .trunk, .motorway, .park-edge, .border-halo, .border-line {
  fill: none;
  stroke-linejoin: round;
}
.river { stroke: #a9d0dd; stroke-width: 5; }
.minor { stroke: #b9b7bc; stroke-width: 2.8; }
.lane { stroke: #c9c7c9; stroke-width: .7; opacity: .75; }
.street { stroke: #bdbbbd; opacity: .9; }
.admin { stroke: #a58bad; stroke-width: 3; stroke-dasharray: 14 5 5 5; opacity: .7; }
.admin.wide { stroke-width: 14; stroke-dasharray: none; opacity: .5; }
.admin.core { stroke: #84708a; stroke-width: 5; stroke-dasharray: none; opacity: .7; }
.park-edge { stroke: #8cc890; stroke-width: 2.5; opacity: .85; }
.border-halo { stroke: #8b9485; stroke-width: 4; opacity: .55; }
.border-line { stroke: #6e746b; stroke-width: 1.8; }
.rail { stroke: #7c7c7c; stroke-width: 3.4; }
.primary { stroke: #f8c27c; stroke-width: 5.5; }
.trunk { stroke: #f8937b; stroke-width: 6.5; }
.motorway { stroke: #e4708b; stroke-width: 6.5; }
.junction { fill: #e4708b; }
.shield { fill: #ebcbd2; stroke: #d190a3; }
.shield-text {
  font: 10.5px "Noto Sans", sans-serif;
  fill: #5c1734;
  text-anchor: middle;
}
.plane { fill: #8763bd; }
.place {
  font-family: "Noto Sans", "Open Sans", sans-serif;
  font-size: 10px;
  fill: #2c2c2c;
  stroke: rgba(255, 255, 255, .6);
  stroke-width: 2px;
  paint-order: stroke;
  text-anchor: middle;
}
.city { font-size: 13px; }
.district { font-style: italic; fill: #9d6fa8; }
.park { font-size: 11.9px; font-style: italic; fill: #0f8226; stroke: rgba(220, 240, 215, .6); }
.strong { font-weight: 500; font-size: 11.6px; }
.zoom {
  position: absolute;
  top: 10px;
  left: 10px;
  border: 2px solid rgba(0, 0, 0, .2);
  border-radius: 4px;
  background-clip: padding-box;
}
.zoom button {
  display: block;
  box-sizing: border-box;
  width: 30px;
  height: 30px;
  padding: 0;
  border: 0;
  background: #fff;
  color: #000;
  font: bold 22px/30px "DejaVu Sans Mono", monospace;
}
.zoom button:first-child {
  border-bottom: 1px solid #ccc;
  border-radius: 2px 2px 0 0;
}
.zoom button:last-child { border-radius: 0 0 2px 2px; }
.credit {
  position: absolute;
  right: 0;
  bottom: 0;
  padding: 0 5px;
  background: rgba(255, 255, 255, .8);
  color: #333;
  font-size: 12px;
  line-height: 16.8px;
  white-space: nowrap;
}
.flag { margin-right: 3px; }
.credit a { color: #0078a8; }
.plot {
  display: flex;
  height: 310px;
  margin-top: 43px;
}
.figure { flex: none; }
.frame { fill: none; stroke: #e5e5e5; }
.grid { stroke: #e5e5e5; }
.axis { fill: none; stroke: #000; }
.series { fill: none; stroke-width: 2; stroke-opacity: .6; stroke-linejoin: bevel; }
.red { stroke: #f00; }
.green { stroke: #008000; }
.blue { stroke: #00f; }
.tick { font-size: 11px; fill: #444; }
.end { text-anchor: end; }
.mid { text-anchor: middle; }
.legend { fill: #fff; fill-opacity: .95; stroke: #e5e5e5; stroke-opacity: .5; }
.legend-text { font-size: 13px; fill: #444; }
.toolbar {
  display: flex;
  flex-direction: column;
  align-items: center;
  width: 30px;
  padding-top: 10px;
  margin-left: -1px;
}
.logo { margin: 0 2px 5px 0; flex: none; }
.tool {
  display: flex;
  flex: none;
  align-items: center;
  justify-content: center;
  box-sizing: border-box;
  width: 30px;
  height: 30px;
  padding-right: 1px;
  border-left: 2px solid transparent;
}
.active { border-left-color: #26aae1; }
.tool svg {
  flex: none;
  width: 17px;
  height: 17px;
  fill: none;
  stroke: #a1a6a9;
  stroke-width: 1.45;
}
.tool .wheel { width: 18px; }
.rule {
  flex: none;
  width: 10px;
  height: 1px;
  background: #c8cccd;
}
</style>
